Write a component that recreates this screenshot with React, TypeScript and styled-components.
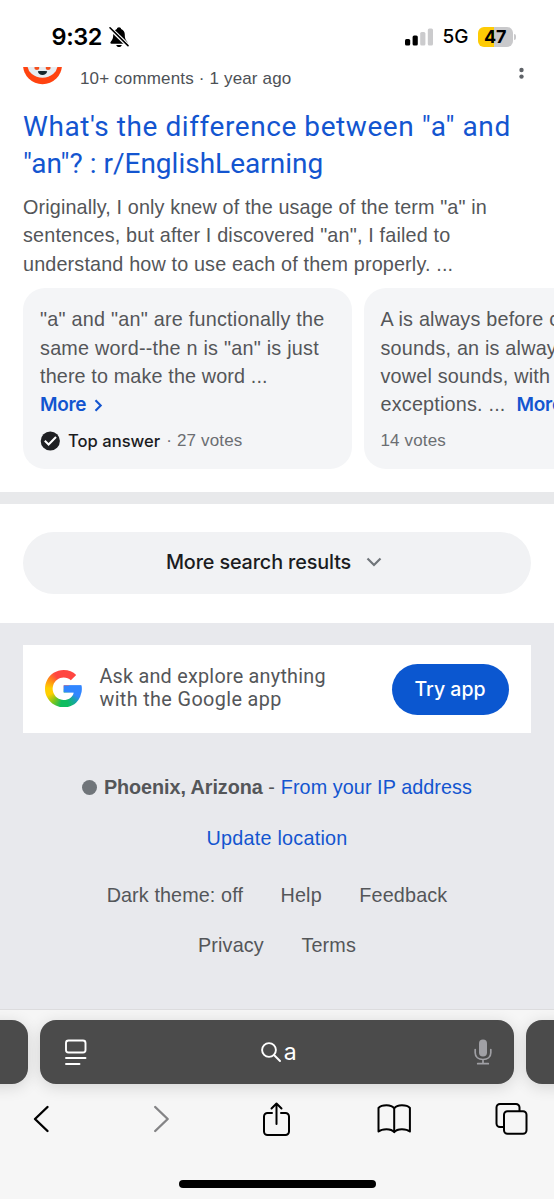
import React from "react";
import styled, { createGlobalStyle } from "styled-components";

const sans = `"Liberation Sans", Arial, sans-serif`;
const display = `Roboto, "Liberation Sans", sans-serif`;
const system = `Inter, "Liberation Sans", sans-serif`;

const GlobalStyle = createGlobalStyle`
  * { box-sizing: border-box; }
  body { margin: 0; background: #fff; font-family: ${sans}; }
  svg { display: block; flex: none; }
`;

const Page = styled.div`
  width: 554px;
  height: 1199px;
  overflow: hidden;
  display: flex;
  flex-direction: column;
  background: #fff;
`;

const Line = styled.span<{ $track?: number }>`
  display: block;
  white-space: pre;
  letter-spacing: ${(p) => p.$track ?? 0.2}px;
`;

/* Status bar */
const StatusBar = styled.header`
  height: 67px;
  flex: none;
  display: flex;
  align-items: flex-start;
  justify-content: space-between;
  padding: 23px 38px 0 51.5px;
  font-family: ${system};
  color: #000;
`;
const StatusGroup = styled.div<{ $gap: number }>`
  display: flex;
  align-items: center;
  gap: ${(p) => p.$gap}px;
  height: 28px;
`;
const Clock = styled.span`
  font-size: 23.5px;
  font-weight: 600;
  line-height: 28px;
  letter-spacing: -0.4px;
`;
const Network = styled.span`
  font-size: 19px;
  font-weight: 500;
  line-height: 28px;
`;
const Battery = styled.div`
  display: flex;
  align-items: center;
  gap: 1px;
  &::after {
    content: "";
    width: 2px;
    height: 6px;
    border-radius: 0 3px 3px 0;
    background: #c9c9cb;
  }
`;
const BatteryLevel = styled.span`
  width: 35.5px;
  height: 20px;
  border-radius: 6px;
  background: linear-gradient(90deg, #fecb05 47%, #c9c9cb 47%);
  font-size: 18px;
  font-weight: 700;
  line-height: 20px;
  text-align: center;
`;

/* Search result */
const Result = styled.article`
  height: 424.5px;
  flex: none;
  overflow: hidden;
  padding-left: 23px;
`;
const ResultHeader = styled.div`
  height: 42px;
  display: flex;
  align-items: flex-start;
  padding-right: 30px;
  font-size: 17px;
  line-height: 23px;
  color: #4d5156;
`;
const HeaderText = styled.div`
  flex: 1;
  padding-left: 17px;
`;
const Title = styled.h3`
  margin: 0;
  font-family: ${display};
  font-weight: 400;
  font-size: 28px;
  line-height: 36.7px;
  color: #1355d0;
`;
const Snippet = styled.p`
  margin: 10.5px 0 0;
  font-size: 19.8px;
  line-height: 28.3px;
  color: #545659;
`;
const Answers = styled.div`
  display: flex;
  gap: 11.5px;
  margin-top: 10px;
`;
const Answer = styled.section`
  width: 329px;
  height: 181px;
  flex: none;
  padding: 17.5px 17px;
  border-radius: 22px;
  background: #f4f5f7;
  font-size: 19.8px;
  line-height: 28.3px;
  color: #545659;
`;
const MoreLink = styled.a`
  display: inline-flex;
  align-items: center;
  gap: 8px;
  height: 28.3px;
  padding-top: 1.5px;
  color: #1355d0;
  font-weight: 600;
  font-family: ${system};
  font-size: 19px;
  letter-spacing: -0.3px;
`;
const AnswerRow = styled.div`
  display: flex;
  gap: 11px;
`;
const AnswerMeta = styled.div`
  display: flex;
  align-items: center;
  height: 24px;
  margin-top: 10.5px;
  font-size: 17px;
  line-height: 24px;
  color: #6b6e72;
`;
const TopAnswer = styled.span`
  margin: 0 6px 0 8px;
  font-family: ${system};
  font-size: 16.6px;
  font-weight: 500;
  color: #1b1c1f;
`;

const Divider = styled.div`
  height: 12px;
  flex: none;
  background: #e8e9eb;
`;

const MoreResults = styled.section`
  height: 119px;
  flex: none;
  padding: 28.5px 23px 0;
`;
const MoreButton = styled.button`
  display: flex;
  align-items: center;
  justify-content: center;
  gap: 15px;
  width: 100%;
  height: 62px;
  padding: 0 6px 2px 0;
  border: 0;
  border-radius: 31px;
  background: #f1f2f4;
  color: #1b1c1f;
  font-family: ${system};
  font-size: 19.8px;
  font-weight: 500;
`;

/* Page footer */
const Footer = styled.footer`
  height: 386.5px;
  flex: none;
  padding: 22.5px 23px 0;
  background: #e8e9ed;
  color: #545659;
  font-size: 19.8px;
`;
const Promo = styled.section`
  display: flex;
  align-items: center;
  height: 87.5px;
  padding: 0 22.5px 0 22px;
  background: #fff;
`;
const PromoText = styled.div`
  flex: 1;
  padding-left: 17px;
  font-family: ${display};
  line-height: 22.7px;
`;
const TryButton = styled.button`
  width: 117px;
  height: 51px;
  margin-top: 1.5px;
  padding: 0 0 1px;
  border: 0;
  border-radius: 26px;
  background: #0b57d0;
  color: #fff;
  font-family: ${system};
  font-size: 19.5px;
  font-weight: 500;
`;
const FooterRow = styled.div<{ $top: number; $gap?: number }>`
  display: flex;
  align-items: center;
  justify-content: center;
  gap: ${(p) => p.$gap ?? 0}px;
  height: 28px;
  margin-top: ${(p) => p.$top}px;
`;
const LocationDot = styled.i`
  width: 15px;
  height: 15px;
  margin-right: 7px;
  border-radius: 50%;
  background: #70757a;
`;
const Place = styled.b`
  letter-spacing: -0.07px;
`;
const FooterLink = styled.a<{ $blue?: boolean; $track?: number }>`
  color: ${(p) => (p.$blue ? "#1355d0" : "inherit")};
  letter-spacing: ${(p) => p.$track ?? 0.15}px;
`;

/* Browser chrome */
const Browser = styled.nav`
  height: 190px;
  flex: none;
  border-top: 1px solid #dcdcde;
  background: #f6f6f6;
  overflow: hidden;
`;
const Tabs = styled.div`
  display: flex;
  gap: 12px;
  width: 674px;
  margin: 10px 0 0 -60px;
`;
const Tab = styled.div<{ $width: number }>`
  display: flex;
  align-items: center;
  justify-content: space-between;
  width: ${(p) => p.$width}px;
  height: 64px;
  flex: none;
  padding: 0 22px 0 23.5px;
  border-radius: 16px;
  background: #4b4b4b;
  box-shadow: 0 3px 16px rgba(0, 0, 0, 0.14);
`;
const Query = styled.div`
  display: flex;
  align-items: center;
  gap: 3px;
  padding-right: 3px;
  color: #fff;
  font-family: ${system};
  font-size: 23px;
`;
const Toolbar = styled.div`
  display: flex;
  align-items: center;
  justify-content: space-between;
  height: 70px;
  padding: 0 26px 0 24px;
`;
const HomeIndicator = styled.div`
  width: 197.5px;
  height: 7.5px;
  margin: 26px 0 0 178.5px;
  border-radius: 4px;
  background: #000;
`;

/* Logo */
const LogoSweep = styled.div`
  width: 22px;
  height: 22px;
  background: conic-gradient(
    #ff4641 0deg 60deg, #3186ff 61deg 118deg, #16a5a5 138deg, #0ebc5f 165deg 190deg,
    #7cc61c 218deg, #ffcf00 248deg 272deg, #ff9314 300deg, #ff4641 330deg
  );
`;
const LOGO_OUTLINE =
  "M22.56 12.25c0-.78-.07-1.53-.2-2.25H12v4.26h5.92c-.26 1.37-1.04 2.53-2.21 3.31-.98.66-2.23 1.06-3.71 1.06-2.86 0-5.29-1.93-6.16-4.53-.22-.66-.35-1.36-.35-2.09s.13-1.43.35-2.09C6.71 7.31 9.14 5.38 12 5.38c1.62 0 3.06.56 4.21 1.64l3.15-3.15C17.45 2.09 14.97 1 12 1 7.7 1 3.99 3.47 2.18 7.07 1.43 8.55 1 10.22 1 12s.43 3.45 1.18 4.93C3.99 20.53 7.7 23 12 23c2.97 0 5.46-.98 7.28-2.66 2.08-1.92 3.28-4.74 3.28-8.09z";

const GoogleLogo = () => (
  <svg width="37.4" height="37.4" viewBox="1 1 22 22">
    <clipPath id="g-outline">
      <path d={LOGO_OUTLINE} />
    </clipPath>
    <g clipPath="url(#g-outline)">
      <foreignObject x="1" y="1" width="22" height="22">
        <LogoSweep />
      </foreignObject>
      <rect x="11" y="10" width="12" height="4.26" fill="#3186ff" />
    </g>
  </svg>
);

const BellOff = () => (
  <svg width="20" height="22" viewBox="0 0 20 22">
    <path
      d="M10 1.2c-1.2 0-2 .8-2.1 1.8C5.400 3.900 4.200 6 4.200 8.600c0 4.200-1 5.600-2.400 7.100-.8.900-.5 2 .7 2h15c1.200 0 1.500-1.100.7-2-1.400-1.500-2.400-2.900-2.400-7.100 0-2.600-1.200-4.700-3.700-5.600C12 2 11.200 1.200 10 1.200z"
      fill="#000"
    />
    <path d="M7.200 19h5.600c-.3 1.300-1.400 2.100-2.800 2.100S7.500 20.300 7.200 19z" fill="#000" />
    <path d="M.5 1.700 19.500 20" stroke="#fff" strokeWidth="4" />
    <path d="M1 1.800 19 19.600" stroke="#000" strokeWidth="1.600" strokeLinecap="round" />
  </svg>
);

const Signal = () => (
  <svg width="29" height="18" viewBox="0 0 29 18">
    <rect x="0" y="11" width="5.200" height="6.600" rx="1.500" fill="#000" />
    <rect x="7.600" y="7.500" width="5.200" height="10.100" rx="1.500" fill="#000" />
    <rect x="15.200" y="4" width="5.200" height="13.600" rx="1.500" fill="#cbcbcd" />
    <rect x="22.800" y="0.400" width="5.200" height="17.200" rx="1.500" fill="#cbcbcd" />
  </svg>
);

const RedditAvatar = () => (
  <svg width="40" height="19" viewBox="0 0 40 19">
    <circle cx="19.500" cy="-2.300" r="19.500" fill="#ff4310" />
    <ellipse cx="19.500" cy="-1.800" rx="15" ry="12.600" fill="#e6edf2" />
    <path d="M11.500 0h4.700v1.300c0 1-.8 1.700-2.200 1.700s-2.500-.7-2.500-1.700zM22.800 0h4.700v1.300c0 1-1.100 1.700-2.500 1.700s-2.200-.7-2.200-1.700z" fill="#f4501e" />
    <path d="M14.800 4.300c3-.5 6.400-.5 9.400 0-.6 2.500-2.300 3.700-4.700 3.700s-4.100-1.200-4.700-3.700z" fill="#14262c" />
  </svg>
);

const Overflow = () => (
  <svg width="5" height="13" viewBox="0 0 5 13">
    <circle cx="2.500" cy="3" r="2.200" fill="#5f6368" />
    <circle cx="2.500" cy="9.600" r="2.200" fill="#5f6368" />
  </svg>
);

const Chevron = ({ w, h, d, color, stroke }: { w: number; h: number; d: string; color: string; stroke: number }) => (
  <svg width={w} height={h} viewBox={`0 0 ${w} ${h}`} fill="none" stroke={color} strokeWidth={stroke}>
    <path d={d} />
  </svg>
);

const CheckBadge = () => (
  <svg width="20" height="20" viewBox="0 0 20 20">
    <circle cx="10.300" cy="10" r="9.600" fill="#1f2023" />
    <path d="M4.800 9.800 8.600 13.500 16 6" fill="none" stroke="#fff" strokeWidth="2" />
  </svg>
);

const ReaderIcon = () => (
  <svg width="23" height="28" viewBox="0 0 23 28" fill="none" stroke="#fff" strokeWidth="1.900" strokeLinecap="round">
    <rect x="2" y="2.500" width="19.500" height="12" rx="2.500" />
    <path d="M2 20h19.500M2 26h13.500" />
  </svg>
);

const SearchIcon = () => (
  <svg width="20" height="20" viewBox="0 0 20 20" fill="none" stroke="#fff" strokeWidth="1.900" strokeLinecap="round">
    <circle cx="8" cy="8" r="6.900" />
    <path d="m13 13 6 6" />
  </svg>
);

const MicIcon = () => (
  <svg width="18" height="27" viewBox="0 0 18 27" fill="none" stroke="#a0a0a5" strokeWidth="1.700" strokeLinecap="round">
    <rect x="5" y="0.500" width="8" height="17" rx="4" fill="#a0a0a5" stroke="none" />
    <path d="M1.200 10.500v3.200c0 4.200 3.200 6.800 7.800 6.800s7.800-2.600 7.800-6.800v-3.200M9 20.800v3.800M3.700 24.700h10.600" />
  </svg>
);

const ToolIcon = ({ color = "#000", children }: { color?: string; children: React.ReactNode }) => (
  <svg
    width="34"
    height="36"
    viewBox="0 0 34 36"
    fill="none"
    stroke={color}
    strokeWidth="2"
    strokeLinecap="round"
    strokeLinejoin="round"
  >
    {children}
  </svg>
);

export default function App() {
  return (
    <>
      <GlobalStyle />
      <Page>
        <StatusBar>
          <StatusGroup $gap={7}>
            <Clock>9:32</Clock>
            <BellOff />
          </StatusGroup>
          <StatusGroup $gap={9}>
            <Signal />
            <Network>5G</Network>
            <Battery>
              <BatteryLevel>47</BatteryLevel>
            </Battery>
          </StatusGroup>
        </StatusBar>

        <Result>
          <ResultHeader>
            <RedditAvatar />
            <HeaderText>
              <Line $track={0.16}>10+ comments · 1 year ago</Line>
            </HeaderText>
            <Overflow />
          </ResultHeader>
          <Title>
            <Line $track={0.57}>What's the difference between "a" and</Line>
            <Line $track={0}>"an"? : r/EnglishLearning</Line>
          </Title>
          <Snippet>
            <Line $track={0.13}>Originally, I only knew of the usage of the term "a" in</Line>
            <Line $track={0.17}>sentences, but after I discovered "an", I failed to</Line>
            <Line $track={0.15}>understand how to use each of them properly. ...</Line>
          </Snippet>
          <Answers>
            <Answer>
              <Line $track={0.24}>"a" and "an" are functionally the</Line>
              <Line $track={0.24}>same word--the n is "an" is just</Line>
              <Line $track={0.13}>there to make the word ...</Line>
              <AnswerRow>
                <MoreLink>
                  More
                  <Chevron w={9} h={13} d="M1.500 1.300 6.700 6.500l-5.200 5.200" color="#1355d0" stroke={2.1} />
                </MoreLink>
              </AnswerRow>
              <AnswerMeta>
                <CheckBadge />
                <TopAnswer>Top answer</TopAnswer>
                <Line $track={0.15}>· 27 votes</Line>
              </AnswerMeta>
            </Answer>
            <Answer>
              <Line>A is always before consonant</Line>
              <Line>sounds, an is always before</Line>
              <Line>vowel sounds, with some</Line>
              <AnswerRow>
                <Line>exceptions. ...</Line>
                <MoreLink>More</MoreLink>
              </AnswerRow>
              <AnswerMeta>
                <Line $track={0.15}>14 votes</Line>
              </AnswerMeta>
            </Answer>
          </Answers>
        </Result>

        <Divider />

        <MoreResults>
          <MoreButton>
            <Line $track={-0.13}>More search results</Line>
            <Chevron w={16} h={10} d="m1.500 1.500 6.500 6.500 6.500-6.500" color="#70757a" stroke={2.2} />
          </MoreButton>
        </MoreResults>

        <Footer>
          <Promo>
            <GoogleLogo />
            <PromoText>
              <Line $track={0.25}>Ask and explore anything</Line>
              <Line $track={0.38}>with the Google app</Line>
            </PromoText>
            <TryButton>Try app</TryButton>
          </Promo>
          <FooterRow $top={40.5}>
            <LocationDot />
            <Place>Phoenix, Arizona</Place>
            <Line>{" - "}</Line>
            <FooterLink $blue $track={0.07}>
              From your IP address
            </FooterLink>
          </FooterRow>
          <FooterRow $top={23}>
            <FooterLink $blue $track={0.25}>
              Update location
            </FooterLink>
          </FooterRow>
          <FooterRow $top={29} $gap={37.5}>
            <FooterLink $track={0.1}>Dark theme: off</FooterLink>
            <FooterLink>Help</FooterLink>
            <FooterLink>Feedback</FooterLink>
          </FooterRow>
          <FooterRow $top={22} $gap={37.5}>
            <FooterLink>Privacy</FooterLink>
            <FooterLink>Terms</FooterLink>
          </FooterRow>
        </Footer>

        <Browser>
          <Tabs>
            <Tab $width={88} />
            <Tab $width={474}>
              <ReaderIcon />
              <Query>
                <SearchIcon />a
              </Query>
              <MicIcon />
            </Tab>
            <Tab $width={88} />
          </Tabs>
          <Toolbar>
            <ToolIcon>
              <path d="M23.500 6 11 18l12.500 12" strokeWidth="2.400" />
            </ToolIcon>
            <ToolIcon color="#848486">
              <path d="M13.200 6l12.500 12-12.500 12" strokeWidth="2.400" />
            </ToolIcon>
            <ToolIcon>
              <path d="M13 12H8.500a3.500 3.500 0 0 0-3.500 3.500v15A3.500 3.500 0 0 0 8.500 34h18a3.500 3.500 0 0 0 3.500-3.500v-15a3.500 3.500 0 0 0-3.500-3.500H22M17.500 23V2.500M12.500 7.500l5-5 5 5" />
            </ToolIcon>
            <ToolIcon>
              <path d="M17.200 7.500c-1.500-2.300-4.500-3.300-7.700-3.300S3 5.200 1.500 7v23.500c1.500-1.300 4.500-2.300 8-2.300s6.200 1 7.700 3c1.500-2 4.200-3 7.700-3s6.500 1 8 2.300V7c-1.500-1.800-4.800-2.800-8-2.800s-6.200 1-7.700 3.300zM17.200 7.500v23.500" />
            </ToolIcon>
            <ToolIcon>
              <path d="M9 26H6a3.500 3.500 0 0 1-3.500-3.500v-16A3.500 3.500 0 0 1 6 3h16a3.500 3.500 0 0 1 3.500 3.500V10" />
              <rect x="10" y="10.300" width="22.500" height="22.500" rx="3.500" />
            </ToolIcon>
          </Toolbar>
          <HomeIndicator />
        </Browser>
      </Page>
    </>
  );
}
